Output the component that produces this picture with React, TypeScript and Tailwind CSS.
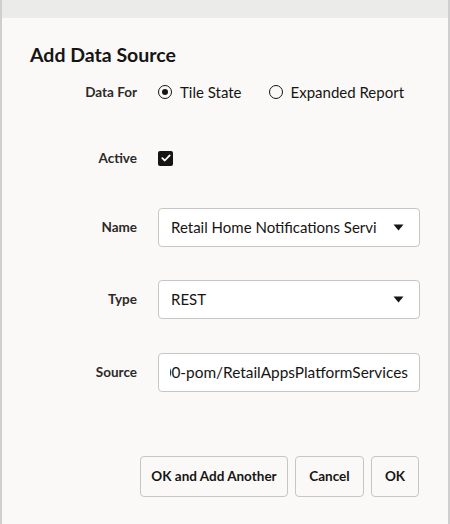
import React from "react";

const font = { fontFamily: 'Lato, "Noto Sans", Arial, sans-serif' };

function Caret() {
  return (
    <svg width="11" height="7" viewBox="0 0 11 7" className="shrink-0">
      <path d="M0.5 0.5 L10.5 0.5 L5.5 6.5 Z" fill="#161513" />
    </svg>
  );
}

function Row({ label, children, className }: { label: string; children: React.ReactNode; className?: string }) {
  return (
    <div className={"flex items-center " + (className || "")}>
      <div className="w-[135px] text-right text-[13.5px] font-bold text-[#2b2a28]">{label}</div>
      <div className="ml-[21px] flex items-center">{children}</div>
    </div>
  );
}

export default function App() {
  return (
    <div style={font} className="w-[450px] h-[524px] bg-[#fbf9f8] flex flex-col overflow-hidden border-l-2 border-r-2 border-[#cfcfcf]">
      <div className="h-[18px] bg-[#ebebea] shrink-0" />
      <div className="pl-[28px] pt-[25px] text-[19.5px] font-bold text-[#161513] leading-[24px]">Add Data Source</div>
      <Row label="Data For" className="mt-[13px] h-[24px]">
        <div className="flex items-center text-[15px] text-[#161513]">
          <span className="w-[14px] h-[14px] rounded-full border-[1.5px] border-[#161513] flex items-center justify-center">
            <span className="w-[6px] h-[6px] rounded-full bg-[#161513]" />
          </span>
          <span className="ml-[8px]">Tile State</span>
          <span className="ml-[27px] w-[14px] h-[14px] rounded-full border-[1.5px] border-[#161513]" />
          <span className="ml-[8px]">Expanded Report</span>
        </div>
      </Row>
      <Row label="Active" className="mt-[42px] h-[24px]">
        <span className="w-[15px] h-[15px] rounded-[2px] bg-[#161513] flex items-center justify-center">
          <svg width="10" height="8" viewBox="0 0 10 8">
            <path d="M1.3 4.2 L3.8 6.5 L8.7 1.4" stroke="#fff" strokeWidth="1.8" fill="none" strokeLinecap="round" strokeLinejoin="round" />
          </svg>
        </span>
      </Row>
      <Row label="Name" className="mt-[38px]">
        <div className="w-[262px] h-[39px] border border-[#c8c6c4] rounded-[4px] bg-white flex items-center pl-[12px] pr-[15px] text-[15px] text-[#161513]">
          <span className="flex-1 whitespace-nowrap overflow-hidden">Retail Home Notifications Servi</span>
          <Caret />
        </div>
      </Row>
      <Row label="Type" className="mt-[33px]">
        <div className="w-[262px] h-[39px] border border-[#c8c6c4] rounded-[4px] bg-white flex items-center pl-[12px] pr-[15px] text-[15px] text-[#161513]">
          <span className="flex-1">REST</span>
          <Caret />
        </div>
      </Row>
      <Row label="Source" className="mt-[34px]">
        <div className="w-[262px] h-[39px] border border-[#c8c6c4] rounded-[4px] bg-white flex items-center pl-[11px] pr-[11px] text-[15.4px] text-[#161513]">
          <div className="w-full flex justify-end overflow-hidden whitespace-nowrap">
            <span>00-pom/RetailAppsPlatformServices</span>
          </div>
        </div>
      </Row>
      <div className="mt-[64px] flex justify-end gap-[7px] pr-[29px]">
        <button className="h-[41px] w-[148px] border border-[#c8c6c4] rounded-[4px] text-[13.5px] font-bold text-[#161513]">OK and Add Another</button>
        <button className="h-[41px] w-[69px] border border-[#c8c6c4] rounded-[4px] text-[13.5px] font-bold text-[#161513]">Cancel</button>
        <button className="h-[41px] w-[48px] border border-[#c8c6c4] rounded-[4px] text-[13.5px] font-bold text-[#161513]">OK</button>
      </div>
    </div>
  );
}
